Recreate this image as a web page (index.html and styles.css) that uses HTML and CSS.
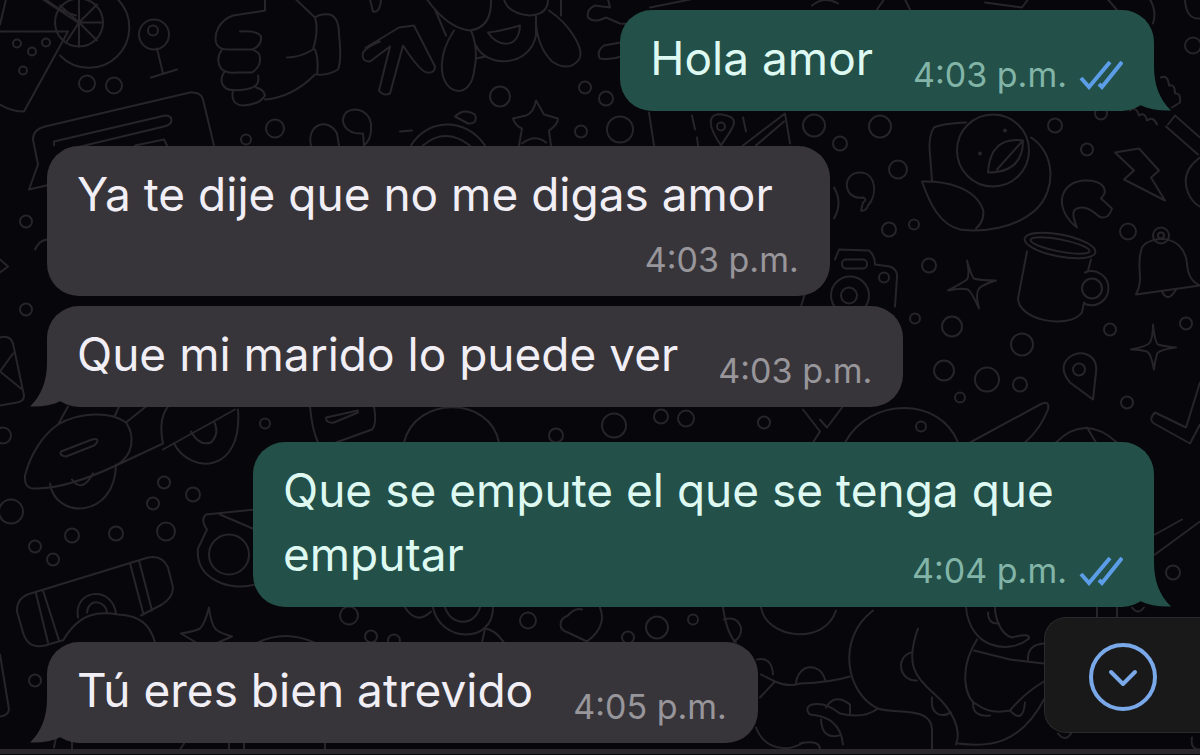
FILE: index.html
```html
<!DOCTYPE html>
<html lang="es">
    <head>
        <meta charset="utf-8" />
        <meta name="viewport" content="width=device-width, initial-scale=1.0">
        <title>Chat</title>
        <link rel="stylesheet" href="styles.css">
    </head>
    <body>
        <div class="wrap">
            <svg class="wallpaper" viewBox="0 0 1200 755" preserveAspectRatio="xMidYMid slice" aria-hidden="true">
                <!-- cocktail and lemon -->
                <path d="M6 0L0 25M43 0L78 23M0 32H68M68 32L24 112Q12 112 0 105M46 0Q60 12 76 16"/>
                <circle cx="79" cy="23" r="24"/>
                <path d="M118 0A39 39 0 0 1 60 56M79 23V0M79 23L97 5M79 23H103M79 23L97 41M79 23V47M79 23L66 43M79 23L60 6"/>
                <circle cx="17" cy="44" r="4"/><circle cx="32" cy="52" r="4"/><circle cx="46" cy="43" r="4"/><circle cx="23" cy="71" r="4"/>
                <circle cx="87" cy="84" r="8"/><circle cx="114" cy="86" r="8"/>
                <circle cx="154" cy="35" r="15"/><circle cx="153" cy="31" r="5"/>
                <path d="M157 49L163 74M151 78L177 70"/>
                <!-- fist -->
                <path d="M265 0V11Q248 14 233 16C219 21 214 34 216 43Q218 50 228 50H252Q262 46 261 37Q258 31 240 32M222 50Q215 60 221 69Q226 74 236 73H252Q263 66 259 54L253 50M224 73Q218 82 226 89Q232 92 245 90Q261 88 258 76M233 91Q230 105 243 106Q260 105 265 96Q264 90 256 88M265 100Q292 98 315 75M296 0L315 18Q319 30 313 50Q300 58 287 58M315 18Q320 14 330 15Q339 18 339 35Q342 60 338 70Q328 76 317 75Q319 60 315 50"/>
                <!-- note card -->
                <path d="M214 146L203 100Q201 92 190 93L45 127Q33 130 33 140L38 165L29 190L55 184M54 146V142L165 116Q173 116 171 123Q169 126 164 127L64 151M135 146L164 140L167 146"/>
                <circle cx="246" cy="140" r="5"/><circle cx="275" cy="129" r="9"/>
                <path d="M311 146C306 125 328 117 337 134L339 146M364 146L363 134C345 135 339 122 346 113C356 105 373 113 371 130Q371 140 364 146"/>
                <path d="M366 48L399 28L414 26L435 67Q435 74 427 73Q420 72 403 46L390 94Q383 97 379 91L390 47L370 62Q361 62 363 53Q367 47 380 42M370 0L373 12Q380 14 381 0"/>
                <!-- dog -->
                <path d="M427 0Q448 29 470 31Q492 28 491 0M504 0Q508 14 530 16Q548 15 548 0M454 31Q438 55 443 77C450 98 471 96 474 72Q479 50 471 31M435 10L446 36M476 46C486 68 529 69 536 36V17M549 11C570 25 585 50 579 60Q569 73 552 62Q538 48 536 24M488 33Q500 32 520 26C519 50 497 48 488 33M561 0V16M476 59L486 57"/>
                <circle cx="500" cy="97" r="10"/><circle cx="585" cy="88" r="6"/><circle cx="606" cy="99" r="7"/><circle cx="581" cy="132" r="6"/><circle cx="620" cy="130" r="13"/>
                <path d="M608 0L610 8L595 6Q586 10 588 18Q594 24 606 18L620 24L636 25M626 42L604 46Q596 52 600 59Q612 61 624 56M650 8L690 0"/>
                <path d="M536 101L544 115L558 119Q558 125 549 131L551 146M536 101Q534 113 526 116L513 119Q515 126 522 129L519 146M522 144Q535 134 546 143"/>
                <path d="M411 146C427 119 465 117 485 146M423 146Q445 127 470 146M400 132L412 131M455 117Q464 108 475 115Q478 125 468 124Z"/>
                <!-- map -->
                <path d="M649 113L654 146M692 116L695 130M697 138L698 146M743 146L785 114L790 144M756 146L784 122M743 118L746 132M721 146C700 115 717 114 722 115C744 118 731 130 721 146"/>
                <circle cx="721" cy="127" r="4"/>
                <path d="M812 6Q824 -4 838 4M877 10L884 0M905 0L910 10M985 3L1022 8L1028 0M1108 0L1120 14M1150 0Q1157 12 1153 24M1185 0Q1186 20 1200 19"/>
                <circle cx="814" cy="126" r="11"/><circle cx="880" cy="127" r="11"/><circle cx="840" cy="144" r="7"/><circle cx="898" cy="170" r="9"/>
                <circle cx="889" cy="230" r="7"/><circle cx="914" cy="225" r="5"/><circle cx="1055" cy="126" r="7"/><circle cx="1087" cy="150" r="6"/>
                <circle cx="1128" cy="232" r="8"/><circle cx="1193" cy="46" r="8"/><circle cx="1101" cy="114" r="6"/>
                <path d="M861 211L863 203Q868 200 863 198C843 201 841 173 860 173C876 173 878 195 868 206Q866 212 861 211ZM834 188Q843 203 834 219"/>
                <!-- peach -->
                <path d="M966 123Q942 124 934 128Q928 137 930 155L932 181M1031 138C1055 153 1057 190 1036 210C1015 229 983 233 960 230C940 225 930 205 922 182C945 181 975 188 983 210Q985 221 976 229"/>
                <circle cx="993" cy="151" r="36"/>
                <path d="M1023 141Q990 137 988 173Q1023 173 1023 141L997 170"/><circle cx="1005" cy="131" r="1"/><circle cx="980" cy="154" r="1"/>
                <!-- croissant -->
                <path d="M1077 228C1054 210 1058 183 1084 181C1102 180 1110 190 1101 199L1112 209Q1108 221 1099 217Q1085 204 1075 210Q1071 214 1077 228Z"/>
                <path d="M1115 153L1139 149L1159 171L1151 178L1165 201L1124 180L1134 171Z"/>
                <!-- racket -->
                <path d="M1161 78Q1168 75 1169 86Q1175 84 1175 94Q1181 93 1180 103L1172 108M1130 111Q1136 106 1139 116Q1145 112 1147 121Q1153 116 1157 125M1168 125L1175 116L1200 138M1166 127L1198 155M1200 158Q1180 172 1188 193Q1192 203 1200 207"/>
                <!-- camera -->
                <path d="M835 260L839 250L869 251Q875 256 875 265L890 267Q898 270 897 278L895 307M801 307L805 294"/>
                <rect x="842" y="260" width="25" height="9" rx="4"/><circle cx="850" cy="296" r="19"/><circle cx="849" cy="296" r="8"/><circle cx="884" cy="278" r="5"/>
                <circle cx="929" cy="266" r="7"/><circle cx="915" cy="319" r="5"/>
                <path d="M967 261Q972 278 974 279Q980 281 996 281Q983 285 979 289Q975 294 979 309Q972 293 968 290Q961 288 948 291Q963 283 967 280Q970 275 967 261Z"/>
                <!-- mug -->
                <ellipse cx="1060" cy="246" rx="36" ry="11" transform="rotate(11 1060 246)"/><ellipse cx="1060" cy="246" rx="30" ry="6" transform="rotate(11 1060 246)"/>
                <path d="M1027 252L1018 299C1018 320 1068 331 1082 313L1084 303M1091 260L1088 271"/><circle cx="1092" cy="289" r="10"/><path d="M1085 273A17 17 0 1 1 1084 304"/>
                <!-- bell -->
                <path d="M1142 248C1135 268 1145 278 1136 295L1200 286Q1188 281 1187 264C1184 233 1149 236 1142 248ZM1162 292Q1168 304 1176 290"/><circle cx="1161" cy="236" r="8"/><circle cx="1161" cy="236" r="3"/>
                <path d="M1153 325Q1155 343 1158 345Q1165 347 1176 348Q1160 350 1157 354Q1155 362 1154 370Q1151 354 1147 352Q1140 350 1131 350Q1147 347 1150 343Q1153 337 1153 325Z"/>
                <circle cx="952" cy="327" r="10"/><circle cx="1022" cy="345" r="11"/><circle cx="1110" cy="330" r="6"/><circle cx="1186" cy="324" r="6"/><circle cx="944" cy="371" r="10"/><circle cx="987" cy="380" r="12"/><circle cx="1020" cy="385" r="7"/><circle cx="960" cy="398" r="5"/><circle cx="1127" cy="403" r="6"/>
                <path d="M1093 400L1070 383C1055 365 1070 352 1084 354Q1098 358 1096 373Z"/><circle cx="1079" cy="370" r="6"/>
                <path d="M1200 383L1186 428L1155 413Q1148 420 1154 424L1190 444L1200 425M970 443L1040 405Q1050 400 1048 410C1042 425 1032 437 1025 443M1056 443Q1085 414 1117 443M1087 428L1096 443M845 443C870 397 940 397 958 443"/>
                <circle cx="921" cy="427" r="5"/><path d="M803 410L820 432L813 443M820 420L827 428L842 408"/>
                <!-- envelope and dots on the left -->
                <circle cx="26" cy="222" r="6"/><circle cx="26" cy="310" r="6"/><circle cx="3" cy="436" r="8"/><circle cx="11" cy="512" r="12"/>
                <path d="M35 250Q39 241 47 240M0 338Q10 335 13 344L24 396Q24 402 17 403L0 406M13 354L0 372L21 389M0 260L8 267L0 273"/>
                <!-- roller skate -->
                <path d="M58 425C42 436 30 456 25 476Q24 489 34 489C60 490 90 478 116 466C134 456 135 436 126 423C110 411 78 413 58 425ZM58 425L68 407M115 416L119 407M126 423L146 407M116 466L163 444Q158 420 168 407M163 450L235 410"/>
                <path d="M61 452L92 440Q99 438 97 443L94 446L66 457Q59 456 61 452ZM50 484C55 520 115 520 116 465M72 480Q82 494 93 474M174 444C190 475 243 475 238 410M191 432Q199 447 211 443Q220 434 214 422"/>
                <circle cx="265" cy="424" r="5"/><circle cx="164" cy="483" r="6"/><circle cx="193" cy="495" r="7"/><circle cx="153" cy="504" r="6"/><circle cx="166" cy="532" r="9"/><circle cx="72" cy="536" r="7"/><circle cx="116" cy="534" r="7"/><circle cx="35" cy="547" r="6"/><circle cx="53" cy="560" r="6"/>
                <path d="M310 407Q312 430 318 443M326 418L358 411M326 418Q326 424 334 423L358 413M374 407Q377 425 372 430L336 443M404 443C415 396 490 396 499 443"/>
                <circle cx="614" cy="426" r="12"/><circle cx="556" cy="436" r="7"/><circle cx="661" cy="417" r="7"/><circle cx="686" cy="419" r="8"/><circle cx="764" cy="423" r="6"/>
                <path d="M255 510L206 515Q200 520 207 530L198 549C195 580 230 592 255 585M220 515L255 530"/><circle cx="229" cy="555" r="20"/>
                <!-- skateboard -->
                <path d="M34 593L148 558Q162 555 168 568L173 588Q173 598 162 605L141 616M34 593Q16 597 17 612L23 633Q28 650 45 646L62 641M36 594L48 643M43 591L59 641M130 564L143 613M139 561L152 611M63 641C80 612 100 612 118 615C140 616 150 625 155 643M78 618C73 590 112 585 116 614M87 613C88 598 106 601 107 613"/>
                <path d="M209 608Q211 625 216 630Q221 634 232 637L218 643M209 608Q205 624 200 629Q194 632 181 634L196 643M258 643Q285 630 314 643M0 655L9 710Q8 716 0 717"/>
                <circle cx="35" cy="681" r="6"/><circle cx="349" cy="616" r="9"/><circle cx="371" cy="637" r="6"/><circle cx="394" cy="641" r="6"/>
                <path d="M405 608Q417 626 431 612M433 608C440 643 493 645 493 608M445 608C452 628 475 626 480 608M482 643L485 629Q495 630 504 643"/>
                <circle cx="528" cy="621" r="8"/><circle cx="657" cy="628" r="11"/><circle cx="693" cy="620" r="5"/><circle cx="628" cy="638" r="6"/>
                <path d="M568 616C558 620 558 630 568 633L587 642C605 629 603 615 600 608M568 616Q575 608 582 610M723 608Q727 635 736 643M724 620Q737 616 741 628Q742 637 734 642M761 608C767 640 825 646 836 611"/>
                <path d="M757 660Q772 657 773 675M761 675L775 682L760 698M775 682Q788 688 800 684Q830 683 850 677M796 684C798 664 820 662 825 680M756 728C765 752 790 752 803 743"/>
                <!-- elephant -->
                <path d="M873 611C835 640 847 695 878 709C895 715 931 706 932 730V750M918 629C905 665 915 678 935 695C952 710 962 730 956 745M911 653C895 658 899 682 917 681M932 698C930 714 940 719 951 713M878 709Q863 720 840 714C820 698 800 705 810 715Q840 717 843 745M826 708Q835 693 850 705V714M821 720Q822 740 839 736M800 744Q820 740 820 750"/>
                <path d="M966 608C970 650 1010 655 1029 639Q1030 633 1012 638C1000 635 995 617 995 608M977 640C958 670 965 700 977 705Q990 715 1010 711Q1025 693 1044 682M974 651L1010 660L1044 664M1028 661Q1027 645 1044 644M973 702Q972 718 990 716M1010 711Q1023 725 1025 703M1044 700C1020 745 990 748 958 744M988 613Q988 625 999 624M1097 608V618M1117 608V618M1132 608Q1138 616 1144 608"/>
                <circle cx="1173" cy="573" r="7"/><path d="M1155 535L1182 520M1155 555L1200 522M1192 738Q1190 750 1200 750M1058 734Q1065 743 1071 734M54 748L56 738M72 738V750M180 750L184 744M229 744V750M244 744V750M325 744V750"/>
            </svg>

            <main class="chat">
                <div class="msg out">
                    <p class="txt">Hola amor</p>
                    <p class="meta">
                        <time>4:03 p.m.</time>
                        <svg class="ticks" viewBox="0 0 44 30" aria-hidden="true"><path d="M2 18L10 27L31 2M20 24L23 27L43 2"/></svg>
                    </p>
                    <svg class="tail" viewBox="0 0 40 45" aria-hidden="true"><path d="M23 0C23 18 28 33 40 44.5C28 45 18 43 9 39L0 10Z"/></svg>
                </div>

                <div class="msg in stacked first">
                    <p class="txt">Ya te dije que no me digas amor</p>
                    <p class="meta"><time>4:03 p.m.</time></p>
                </div>
                <div class="msg in">
                    <p class="txt">Que mi marido lo puede ver</p>
                    <p class="meta"><time>4:03 p.m.</time></p>
                    <svg class="tail" viewBox="0 0 40 45" aria-hidden="true"><path d="M23 0C23 18 28 33 40 44.5C28 45 18 43 9 39L0 10Z"/></svg>
                </div>

                <div class="msg out multi first">
                    <p class="txt">Que se empute el que se tenga que emputar</p>
                    <p class="meta">
                        <time>4:04 p.m.</time>
                        <svg class="ticks" viewBox="0 0 44 30" aria-hidden="true"><path d="M2 18L10 27L31 2M20 24L23 27L43 2"/></svg>
                    </p>
                    <svg class="tail" viewBox="0 0 40 45" aria-hidden="true"><path d="M23 0C23 18 28 33 40 44.5C28 45 18 43 9 39L0 10Z"/></svg>
                </div>

                <div class="msg in first">
                    <p class="txt">Tú eres bien atrevido</p>
                    <p class="meta"><time>4:05 p.m.</time></p>
                    <svg class="tail" viewBox="0 0 40 45" aria-hidden="true"><path d="M23 0C23 18 28 33 40 44.5C28 45 18 43 9 39L0 10Z"/></svg>
                </div>
            </main>

            <button class="to-bottom" type="button" aria-label="Ir al final">
                <svg viewBox="0 0 70 70" aria-hidden="true"><circle cx="35" cy="35" r="32"/><path d="M23 30L35 42L47 30"/></svg>
            </button>
            <div class="bar"></div>
        </div>
    </body>
</html>
```
FILE: styles.css
```css
* { margin: 0; padding: 0; box-sizing: border-box;}
body { font: 46px/64px Inter, "Liberation Sans", sans-serif; background: #07060b; color: #f1eff5;}
.wrap { position: relative; overflow: hidden;}

.wallpaper { position: absolute; top: 0; left: 0; width: 100%; height: 100%; fill: none; stroke: #27252a; stroke-width: 2; stroke-linecap: round; stroke-linejoin: round;}

.chat { position: relative; display: flex; flex-direction: column; align-items: flex-start; gap: 10px; padding: 10px 46px 6px 47px;}
.msg { position: relative; display: flex; align-items: flex-end; gap: 40px; max-width: calc(100% - 206px); padding: 16px 31px 16px 30px; border-radius: 32px;}
.first { margin-top: 25px;}
.txt { padding-bottom: 5px;}
.meta { display: flex; align-items: center; gap: 12px; font-size: 34px; line-height: 40px; white-space: nowrap;}

.in { background: #37353a; fill: #37353a;}
.in .meta { color: #98969b;}
.out { align-self: flex-end; background: #235048; fill: #235048; color: #def9f2;}
.out .meta { color: #82b5a8;}

/* time under the text */
.stacked { flex-direction: column; gap: 9px;}
.stacked .txt { padding-right: 26px;}
/* time next to the last line */
.multi { flex-direction: column; gap: 0;}
.multi .meta { margin-top: -40px;}

.ticks { width: 44px; height: 30px; fill: none; stroke: #5c9de8; stroke-width: 4;}
.tail { position: absolute; right: -17px; bottom: 0; width: 40px; height: 45px;}
.in .tail { right: auto; left: -17px; transform: scaleX(-1);}

.to-bottom { position: absolute; right: 0; bottom: 21px; width: 156px; height: 116px; padding-top: 4px; border: 1px solid #2a292b; border-right: 0; border-radius: 22px 0 0 22px; background: #191919; cursor: pointer;}
.to-bottom svg { display: block; width: 70px; height: 70px; margin: 0 auto; fill: none; stroke: #7aa9ea; stroke-width: 4; stroke-linecap: round; stroke-linejoin: round;}
.bar { position: relative; height: 5px; background: #2b292e;}
```
